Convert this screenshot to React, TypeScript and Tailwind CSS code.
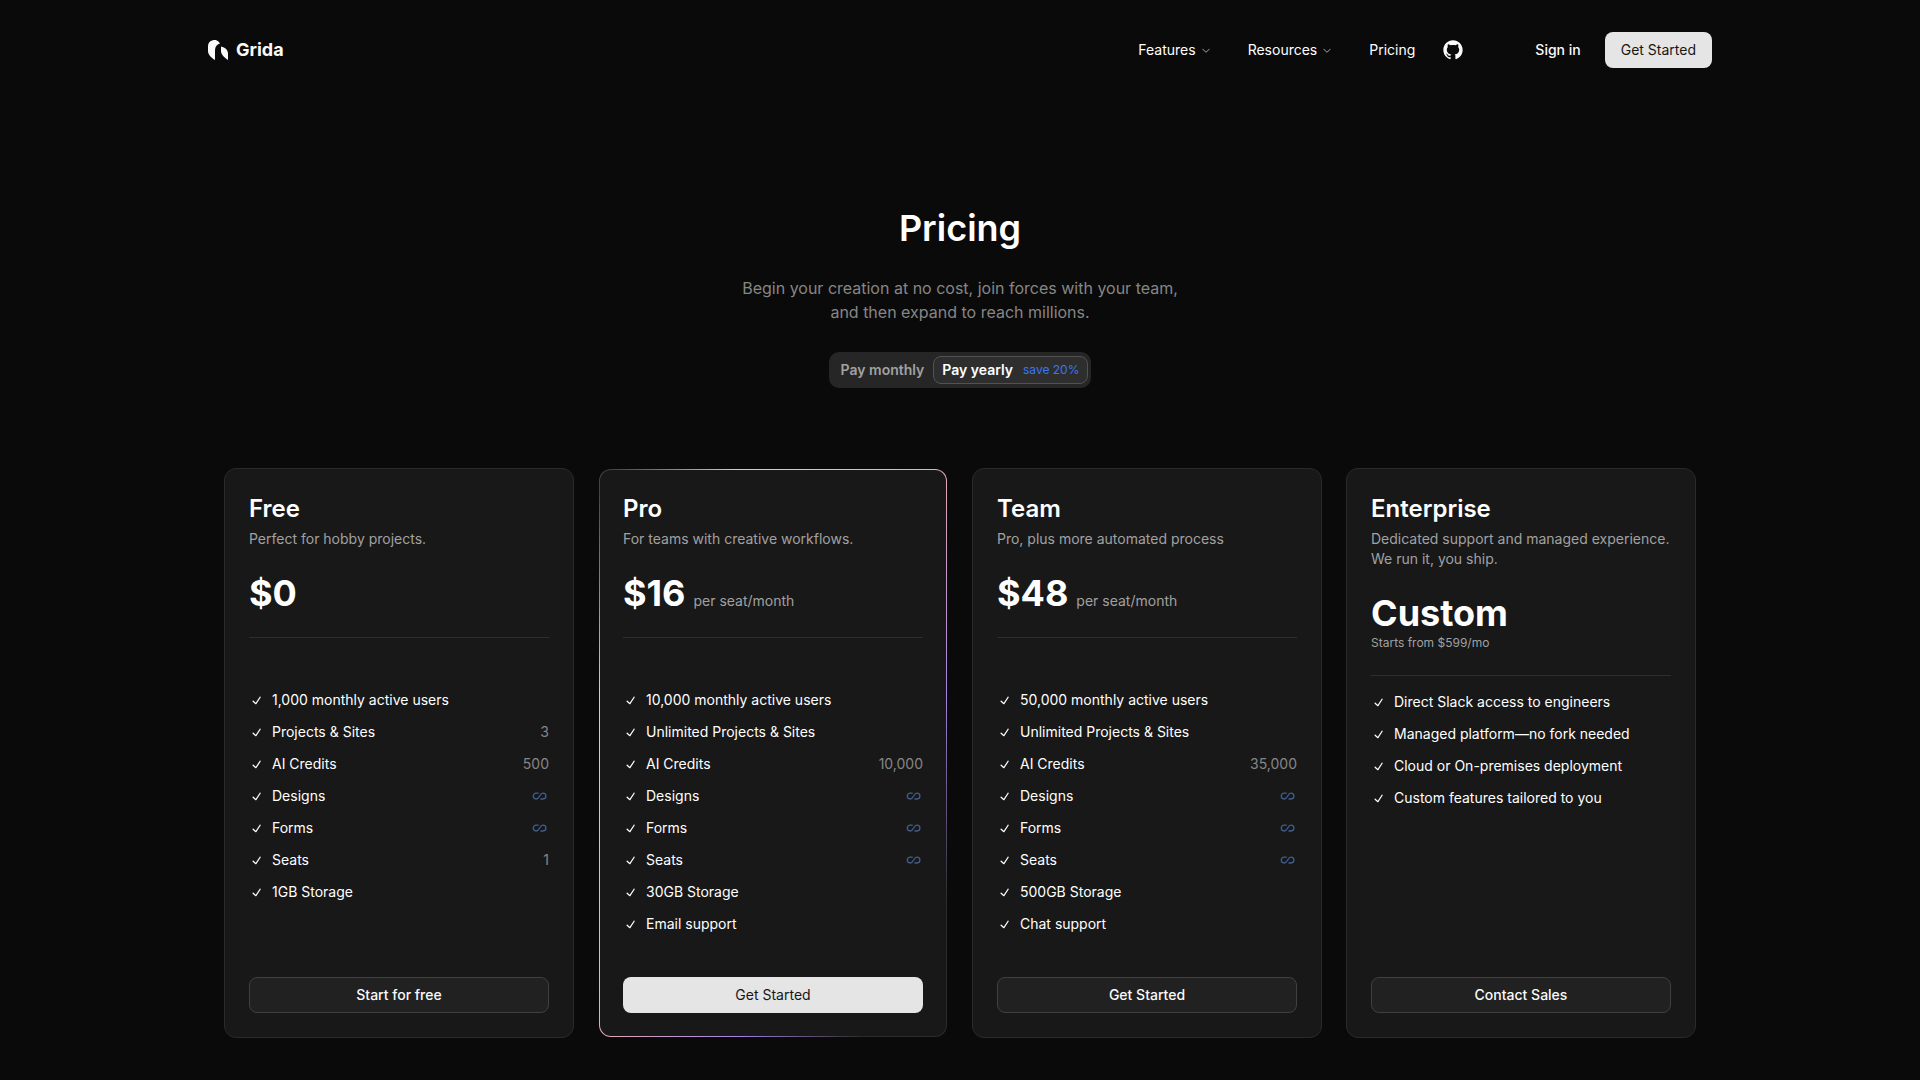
import { RxCheck, RxChevronDown, RxGithubLogo } from "react-icons/rx";

type Feature = {
  name: string;
  trail?: string;
  unlimited?: boolean;
};

type Plan = {
  name: string;
  description: string;
  price: string;
  unit?: string;
  note?: string;
  highlight?: boolean;
  cta: string;
  features: Feature[];
};

const plans: Plan[] = [
  {
    name: "Free",
    description: "Perfect for hobby projects.",
    price: "$0",
    cta: "Start for free",
    features: [
      { name: "1,000 monthly active users" },
      { name: "Projects & Sites", trail: "3" },
      { name: "AI Credits", trail: "500" },
      { name: "Designs", unlimited: true },
      { name: "Forms", unlimited: true },
      { name: "Seats", trail: "1" },
      { name: "1GB Storage" },
    ],
  },
  {
    name: "Pro",
    description: "For teams with creative workflows.",
    price: "$16",
    unit: "per seat/month",
    highlight: true,
    cta: "Get Started",
    features: [
      { name: "10,000 monthly active users" },
      { name: "Unlimited Projects & Sites" },
      { name: "AI Credits", trail: "10,000" },
      { name: "Designs", unlimited: true },
      { name: "Forms", unlimited: true },
      { name: "Seats", unlimited: true },
      { name: "30GB Storage" },
      { name: "Email support" },
    ],
  },
  {
    name: "Team",
    description: "Pro, plus more automated process",
    price: "$48",
    unit: "per seat/month",
    cta: "Get Started",
    features: [
      { name: "50,000 monthly active users" },
      { name: "Unlimited Projects & Sites" },
      { name: "AI Credits", trail: "35,000" },
      { name: "Designs", unlimited: true },
      { name: "Forms", unlimited: true },
      { name: "Seats", unlimited: true },
      { name: "500GB Storage" },
      { name: "Chat support" },
    ],
  },
  {
    name: "Enterprise",
    description: "Dedicated support and managed experience. We run it, you ship.",
    price: "Custom",
    note: "Starts from $599/mo",
    cta: "Contact Sales",
    features: [
      { name: "Direct Slack access to engineers" },
      { name: "Managed platform—no fork needed" },
      { name: "Cloud or On-premises deployment" },
      { name: "Custom features tailored to you" },
    ],
  },
];

function Logo() {
  return (
    <svg viewBox="0 0 20 20" className="size-5" fill="currentColor" aria-hidden="true">
      <path d="M0 6.4A6.3 6.3 0 0 1 12 3.6C8.6 4.4 7 7 7 10.4V20C3.6 18 0 15 0 11Z" />
      <path d="M13 6.6C17.2 7.4 20 10.2 20 14V20C17 18 13 15 13 11Z" />
    </svg>
  );
}

function InfinityIcon() {
  return (
    <svg
      viewBox="0 0 18 18"
      className="size-[18px] text-[#3f5f92]"
      fill="none"
      stroke="currentColor"
      strokeWidth="1.3"
      strokeLinecap="round"
      role="img"
      aria-label="Unlimited"
    >
      <path d="M7.2 6.2H5.2A2.9 2.9 0 0 0 5.2 12C9 12 8.4 6.2 12 6.2A2.9 2.9 0 0 1 12 12H10" />
    </svg>
  );
}

function Header() {
  return (
    <header className="max-w-[1536px] mx-auto px-4 py-8 flex items-center justify-between">
      <a href="#home" className="flex items-center gap-2 text-lg font-bold">
        <Logo />
        Grida
      </a>

      <div className="flex items-center">
        <nav className="flex items-center gap-9 text-sm text-white">
          <button className="flex items-center gap-1">
            Features
            <RxChevronDown className="size-3 text-neutral-400" />
          </button>
          <button className="flex items-center gap-1">
            Resources
            <RxChevronDown className="size-3 text-neutral-400" />
          </button>
          <a href="#pricing">Pricing</a>
        </nav>
        <a href="#github" aria-label="GitHub" className="ml-7">
          <RxGithubLogo className="size-5" />
        </a>
        <a href="#signin" className="ml-[72px] text-sm font-medium">
          Sign in
        </a>
        <button className="ml-6 h-9 px-4 rounded-lg bg-neutral-200 text-neutral-900 text-sm">
          Get Started
        </button>
      </div>
    </header>
  );
}

function BillingToggle() {
  return (
    <div className="flex gap-px p-1 pr-[3px] rounded-[10px] bg-neutral-800 text-sm font-semibold">
      <button className="px-2 text-neutral-400">Pay monthly</button>
      <button className="h-7 px-2 flex items-center gap-2.5 rounded-lg border border-neutral-600 bg-[#2e2e2e] text-white">
        Pay yearly
        <span className="text-xs font-normal text-[#3b76f0]">save 20%</span>
      </button>
    </div>
  );
}

function PlanCard({ plan }: { plan: Plan }) {
  return (
    <section
      className={
        plan.highlight
          ? "flex flex-col m-px p-[23px] rounded-xl border border-transparent [background:linear-gradient(#181818,#181818)_padding-box,linear-gradient(to_bottom_right,#4a4238_2%,#f0cc90_20%,#f4b0ac_46%,#a583e0_70%,#2b2b2b_88%)_border-box]"
          : "flex flex-col p-6 rounded-xl border border-[#2a2a2a] bg-[#181818]"
      }
    >
      <h2 className="text-2xl font-semibold text-white">{plan.name}</h2>
      <p className="mt-1 text-sm text-neutral-400">{plan.description}</p>
      <p className="mt-6 flex items-baseline gap-2">
        <span className="text-4xl font-bold text-white">{plan.price}</span>
        {plan.unit && <span className="text-sm text-neutral-400">{plan.unit}</span>}
      </p>
      {plan.note && <p className="mt-0.5 text-xs text-neutral-400">{plan.note}</p>}
      <hr className="mt-6 border-[#2e2e2e]" />

      <ul className={plan.note ? "mt-4 space-y-3" : "mt-[52px] space-y-3"}>
        {plan.features.map((feature) => (
          <li key={feature.name} className="flex items-center text-sm text-white">
            <RxCheck className="size-[15px] mr-2" />
            {feature.name}
            <span className="ml-auto text-[#868686]">
              {feature.unlimited ? <InfinityIcon /> : feature.trail}
            </span>
          </li>
        ))}
      </ul>

      <div className="mt-auto pt-[43px]">
        <button
          className={
            plan.highlight
              ? "w-full h-9 rounded-lg bg-neutral-200 text-neutral-900 text-sm"
              : "w-full h-9 rounded-lg border border-neutral-700 bg-[#212121] text-sm font-medium"
          }
        >
          {plan.cta}
        </button>
      </div>
    </section>
  );
}

export default function App() {
  return (
    <div className="min-h-screen bg-neutral-950 text-neutral-50 font-['Inter',sans-serif]">
      <Header />

      <main className="max-w-[1536px] mx-auto px-8 pb-10">
        <div className="pt-[108px] flex flex-col items-center text-center">
          <h1 className="text-4xl font-semibold text-white">Pricing</h1>
          <p className="mt-7 text-base text-[#868686]">
            Begin your creation at no cost, join forces with your team,
            <br />
            and then expand to reach millions.
          </p>
          <div className="mt-7">
            <BillingToggle />
          </div>
        </div>

        <div className="mt-20 grid grid-cols-1 md:grid-cols-2 xl:grid-cols-4 gap-6">
          {plans.map((plan) => (
            <PlanCard key={plan.name} plan={plan} />
          ))}
        </div>
      </main>
    </div>
  );
}
